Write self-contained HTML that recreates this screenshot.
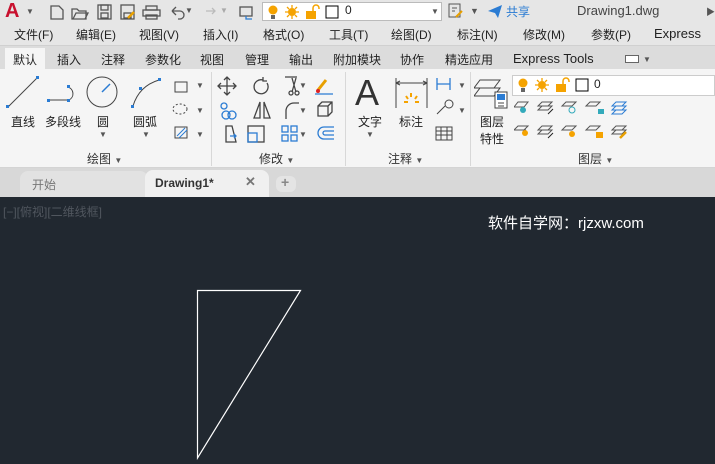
<!DOCTYPE html>
<html><head><meta charset="utf-8"><style>
*{margin:0;padding:0;box-sizing:border-box}
body{width:715px;height:464px;overflow:hidden;background:#212830;font-family:"Liberation Sans","Noto Sans CJK SC",sans-serif;font-size:12px;color:#222;position:relative}
.a{position:absolute;white-space:nowrap}
.top{left:0;top:0;width:715px;height:46px;background:#e6e6e6;border-bottom:1px solid #d0d0d0}
.tabs{left:0;top:46px;width:715px;height:23px;background:#dcdcdc}
.rib{left:0;top:69px;width:715px;height:99px;background:#f5f5f5;border-bottom:1px solid #d4d4d4}
.tb{left:0;top:168px;width:715px;height:29px;background:#d8d8d8}
.sep{top:72px;width:1px;height:94px;background:#d8d8d8}
.lbl{top:150px;font-size:12px;color:#333}
.tri{font-size:8px;color:#555}
</style></head><body>
<div class="a top"></div>
<div class="a tabs"></div>
<div class="a rib"></div>
<div class="a tb"></div>

<div class="a" style="left:5px;top:0px;font-size:20px;font-weight:bold;color:#c8102e;font-family:'Liberation Sans'">A</div>
<div class="a tri" style="left:26px;top:7px">▼</div>
<svg class="a" style="left:48px;top:3px" width="210" height="18" viewBox="0 0 210 18" fill="none" stroke="#555" stroke-width="1.3">
<path d="M3 3h8l4 4v9H3z"/>
<path d="M24 6h5l2 2h7v8H24z M25 16l3-6h12l-3 6"/>
<rect x="50" y="2" width="13" height="14"/><rect x="53" y="2" width="7" height="5"/><rect x="53" y="10" width="7" height="5"/>
<rect x="73" y="2" width="13" height="14"/><rect x="76" y="10" width="7" height="5"/><path d="M80 15l6-6" stroke="#e8a000" stroke-width="2.5"/>
<rect x="98" y="3" width="11" height="4"/><rect x="95" y="7" width="17" height="6"/><rect x="98" y="12" width="11" height="4"/>
<path d="M124 8l4-4M124 8l4 4M124 8h8a4 4 0 0 1 0 8h-2"/>
<path d="M158 8h9M164 5l3 3-3 3" stroke="#bbb"/>
<rect x="192" y="4" width="12" height="9"/><path d="M198 13v3h6" stroke="#2b7cd3"/>
</svg>
<div class="a tri" style="left:185px;top:6px">▼</div><div class="a tri" style="left:220px;top:6px;color:#aaa">▼</div>
<div class="a" style="left:262px;top:2px;width:180px;height:19px;background:#fff;border:1px solid #bbb"></div>
<svg class="a" style="left:266px;top:4px" width="76" height="16"><circle cx="7" cy="6" r="4.5" fill="#f5a300"/><rect x="5" y="11" width="4" height="4" fill="#666"/><circle cx="26" cy="8" r="4" fill="#f5a300"/><path d="M26 1v3M26 12v3M19 8h3M30 8h3M21 3l2 2M29 11l2 2M21 13l2-2M29 5l2-2" stroke="#f5a300" stroke-width="1.3"/><rect x="40" y="7" width="10" height="8" fill="#f5a300"/><path d="M47 7V4a3 3 0 0 1 6 0v1" stroke="#f5a300" stroke-width="1.5" fill="none"/><rect x="60" y="2" width="12" height="12" fill="#fff" stroke="#000"/></svg>
<div class="a" style="left:345px;top:3px;font-size:12px">0</div>
<div class="a tri" style="left:431px;top:7px;color:#555">▼</div>
<svg class="a" style="left:447px;top:2px" width="20" height="18" fill="none" stroke="#555"><rect x="2" y="2" width="11" height="13"/><path d="M5 6h5M5 9h3"/><path d="M9 15l6-6" stroke="#e8a000" stroke-width="2"/></svg>
<div class="a" style="left:470px;top:6px;font-size:9px;color:#555">▼</div>
<svg class="a" style="left:487px;top:4px" width="16" height="15"><path d="M1 7l14-6-4 13-3-5z" fill="#2b7cd3"/></svg>
<div class="a" style="left:506px;top:3px;color:#2b7cd3;font-size:12px">共享</div>
<div class="a" style="left:577px;top:3px;color:#444;font-size:13px">Drawing1.dwg</div>
<div class="a" style="left:706px;top:5px;font-size:9px;color:#555">▶</div>

<div class="a" style="top:26px;left:14px">文件(F)</div>
<div class="a" style="top:26px;left:76px">编辑(E)</div>
<div class="a" style="top:26px;left:139px">视图(V)</div>
<div class="a" style="top:26px;left:203px">插入(I)</div>
<div class="a" style="top:26px;left:263px">格式(O)</div>
<div class="a" style="top:26px;left:329px">工具(T)</div>
<div class="a" style="top:26px;left:391px">绘图(D)</div>
<div class="a" style="top:26px;left:457px">标注(N)</div>
<div class="a" style="top:26px;left:523px">修改(M)</div>
<div class="a" style="top:26px;left:591px">参数(P)</div>
<div class="a" style="top:26px;left:654px;font-size:13px">Express</div>

<div class="a" style="left:5px;top:48px;width:40px;height:21px;background:#f5f5f5"></div>
<div class="a" style="top:51px;left:13px">默认</div>
<div class="a" style="top:51px;left:57px">插入</div>
<div class="a" style="top:51px;left:101px">注释</div>
<div class="a" style="top:51px;left:145px">参数化</div>
<div class="a" style="top:51px;left:200px">视图</div>
<div class="a" style="top:51px;left:245px">管理</div>
<div class="a" style="top:51px;left:289px">输出</div>
<div class="a" style="top:51px;left:333px">附加模块</div>
<div class="a" style="top:51px;left:400px">协作</div>
<div class="a" style="top:51px;left:445px">精选应用</div>
<div class="a" style="top:51px;left:513px;font-size:13px">Express Tools</div>
<div class="a" style="left:625px;top:55px;width:14px;height:8px;border:1px solid #666;background:#fff"></div>
<div class="a tri" style="left:643px;top:55px">▼</div>

<div class="a sep" style="left:211px"></div>
<div class="a sep" style="left:345px"></div>
<div class="a sep" style="left:470px"></div>

<svg class="a" style="left:0;top:72px" width="212" height="80" fill="none" stroke="#444" stroke-width="1">
<path d="M8 35L37 6"/><rect x="6" y="33" width="3" height="3" fill="#2b7cd3" stroke="none"/><rect x="36" y="4" width="3" height="3" fill="#2b7cd3" stroke="none"/>
<path d="M49 28h20a7 7 0 0 0-1-13"/><rect x="47" y="27" width="3" height="3" fill="#2b7cd3" stroke="none"/><rect x="67" y="27" width="3" height="3" fill="#2b7cd3" stroke="none"/><rect x="67" y="13" width="3" height="3" fill="#2b7cd3" stroke="none"/>
<circle cx="102" cy="20" r="15"/><path d="M102 20l8-8" stroke="#2b7cd3" stroke-width="1.5"/>
<path d="M133 34q6-20 26-26"/><rect x="131" y="33" width="3" height="3" fill="#2b7cd3" stroke="none"/><rect x="158" y="6" width="3" height="3" fill="#2b7cd3" stroke="none"/><rect x="139" y="15" width="3" height="3" fill="#2b7cd3" stroke="none"/>
<rect x="175" y="10" width="12" height="10"/><ellipse cx="180" cy="37" rx="7" ry="5" stroke-dasharray="2 2"/><rect x="175" y="55" width="12" height="11"/><path d="M177 64l8-8M179 66l8-8" stroke="#2b7cd3"/>
</svg>
<div class="a tri" style="left:196px;top:81px">▼</div><div class="a tri" style="left:196px;top:106px">▼</div><div class="a tri" style="left:196px;top:130px">▼</div>
<div class="a" style="top:113px;left:11px">直线</div>
<div class="a" style="top:113px;left:45px">多段线</div>
<div class="a" style="top:113px;left:97px">圆</div>
<div class="a" style="top:113px;left:133px">圆弧</div>
<div class="a tri" style="left:99px;top:130px">▼</div><div class="a tri" style="left:142px;top:130px">▼</div>
<div class="a lbl" style="left:87px">绘图 <span class="tri">▼</span></div>

<svg class="a" style="left:214px;top:74px" width="130" height="70" fill="none" stroke="#444" stroke-width="1.3">
<path d="M13 4v16M5 12h16M10 6l3-3 3 3M10 18l3 3 3-3M7 9l-3 3 3 3M19 9l3 3-3 3"/>
<path d="M49 6a7 7 0 1 0 4 3M49 3v4h4"/>
<path d="M71 3h12M78 4l4 14M82 4l-4 14"/><circle cx="77" cy="19" r="2"/><circle cx="83" cy="19" r="2"/>
<path d="M104 16l8-10" stroke="#e8a000" stroke-width="3"/><circle cx="104" cy="17" r="2" fill="#d22" stroke="none"/><path d="M101 20h18" stroke="#2b7cd3"/>
<circle cx="10" cy="32" r="3" stroke="#2b7cd3"/><circle cx="12" cy="41" r="4" stroke="#2b7cd3"/><circle cx="18" cy="41" r="4" stroke="#2b7cd3"/>
<path d="M40 44l6-16v16zM50 44v-16l6 16z"/>
<path d="M72 45v-8a8 8 0 0 1 8-8h5"/>
<path d="M104 32h10v10h-10zM104 32l4-4h10v10l-4 4M114 32l4-4"/>
<path d="M12 52h6l4 16h-10z"/><path d="M16 62h6M20 60l2 2-2 2" stroke="#2b7cd3"/>
<rect x="34" y="52" width="16" height="16"/><rect x="34" y="59" width="9" height="9" stroke="#2b7cd3"/>
<rect x="68" y="52" width="6" height="6" stroke="#2b7cd3"/><rect x="77" y="52" width="6" height="6" stroke="#2b7cd3"/><rect x="68" y="61" width="6" height="6" stroke="#2b7cd3"/><rect x="77" y="61" width="6" height="6" stroke="#2b7cd3"/>
<path d="M120 53h-10a6 6 0 0 0 0 12h10M120 57h-9a2 2 0 0 0 0 4h9" stroke="#2b7cd3"/>
</svg>
<div class="a tri" style="left:299px;top:81px">▼</div><div class="a tri" style="left:299px;top:106px">▼</div><div class="a tri" style="left:299px;top:130px">▼</div>
<div class="a lbl" style="left:259px">修改 <span class="tri">▼</span></div>

<div class="a" style="left:355px;top:72px;font-size:36px;color:#333;font-family:'Liberation Sans'">A</div>
<div class="a" style="top:113px;left:358px">文字</div>
<div class="a tri" style="left:366px;top:130px">▼</div>
<svg class="a" style="left:394px;top:76px" width="70" height="68" fill="none" stroke="#444" stroke-width="1">
<path d="M2 2v30M33 2v30M2 7h31M2 7l4-2M2 7l4 2M33 7l-4-2M33 7l-4 2"/>
<path d="M10 26h4M21 26h4M12 20l2 3M23 20l-2 3M17 17v4" stroke="#f5a300" stroke-width="2"/>
<path d="M43 2v12M56 2v12M43 8h13" stroke="#2b7cd3" stroke-width="1.3"/>
<path d="M43 38l8-8"/><circle cx="55" cy="28" r="4"/>
<rect x="42" y="51" width="16" height="13"/><path d="M42 55h16M42 59h16M47 51v13M53 51v13"/>
</svg>
<div class="a" style="top:113px;left:399px">标注</div>
<div class="a tri" style="left:458px;top:81px">▼</div><div class="a tri" style="left:458px;top:106px">▼</div>
<div class="a lbl" style="left:388px">注释 <span class="tri">▼</span></div>

<svg class="a" style="left:474px;top:74px" width="36" height="36" fill="none" stroke="#444"><path d="M6 6h20l-6 8H0zM6 14h20l-6 8H0zM6 22h14"/><rect x="21" y="18" width="12" height="16" fill="#fff"/><rect x="23" y="20" width="8" height="6" fill="#2b7cd3" stroke="none"/><path d="M24 29h6M24 32h6"/></svg>
<div class="a" style="top:113px;left:480px">图层</div>
<div class="a" style="top:130px;left:480px">特性</div>
<div class="a" style="left:512px;top:75px;width:203px;height:21px;background:#fff;border:1px solid #ccc"></div>
<svg class="a" style="left:516px;top:77px" width="76" height="18"><circle cx="7" cy="6" r="4.5" fill="#f5a300"/><rect x="5" y="11" width="4" height="4" fill="#666"/><circle cx="26" cy="8" r="4" fill="#f5a300"/><path d="M26 1v3M26 12v3M19 8h3M30 8h3M21 3l2 2M29 11l2 2M21 13l2-2M29 5l2-2" stroke="#f5a300" stroke-width="1.3"/><rect x="40" y="7" width="10" height="8" fill="#f5a300"/><path d="M47 7V4a3 3 0 0 1 6 0v1" stroke="#f5a300" stroke-width="1.5" fill="none"/><rect x="60" y="2" width="12" height="12" fill="#fff" stroke="#000"/></svg>
<div class="a" style="left:594px;top:77px;font-size:12px">0</div>
<svg class="a" style="left:514px;top:100px" width="120" height="44" fill="none" stroke="#555">
<path d="M4 2h10l-4 5H0z"/><circle cx="9" cy="10" r="3" fill="#3ab" stroke="none"/>
<path d="M28 2h10l-4 4H24zM28 6h10l-4 4H24z"/><path d="M34 14l5-5" stroke="#222"/>
<path d="M52 2h10l-4 4H48z"/><circle cx="58" cy="10" r="3" stroke="#3ab"/>
<path d="M76 2h10l-4 4H72z"/><rect x="84" y="9" width="6" height="5" fill="#3ab" stroke="none"/>
<path d="M102 2h10l-4 4H98zM102 6h10l-4 4H98zM102 10h10l-4 4H98z" stroke="#2b7cd3"/>
<path d="M4 26h10l-4 4H0zM4 30h8"/><circle cx="11" cy="33" r="3" fill="#f5a300" stroke="none"/>
<path d="M28 26h10l-4 4H24zM28 30h10l-4 4H24z"/><path d="M34 38l5-5" stroke="#222"/>
<path d="M52 26h10l-4 4H48zM52 30h6"/><circle cx="58" cy="34" r="3" fill="#f5a300" stroke="none"/>
<path d="M76 26h10l-4 4H72z"/><rect x="82" y="32" width="7" height="6" fill="#f5a300" stroke="none"/>
<path d="M102 26h10l-4 4H98zM102 30h10l-4 4H98z"/><path d="M106 38l6-6" stroke="#e8a000" stroke-width="2.5"/>
</svg>
<div class="a lbl" style="left:578px">图层 <span class="tri">▼</span></div>

<div class="a" style="left:20px;top:171px;width:128px;height:26px;background:#e2e2e2;border-radius:8px 8px 0 0"></div>
<div class="a" style="left:32px;top:176px;color:#777">开始</div>
<div class="a" style="left:145px;top:170px;width:124px;height:27px;background:#f0f0f0;border-radius:8px 8px 0 0"></div>
<div class="a" style="left:155px;top:176px;font-weight:bold;font-size:12px;color:#333">Drawing1*</div>
<div class="a" style="left:245px;top:174px;font-size:13px;color:#777;font-weight:bold">✕</div>
<div class="a" style="left:276px;top:176px;width:20px;height:16px;background:#e4e4e4;border-radius:6px"></div>
<div class="a" style="left:281px;top:174px;font-size:14px;color:#888;font-weight:bold">+</div>

<div class="a" style="left:3px;top:203px;color:#50565e;font-size:12px">[−][俯视][二维线框]</div>
<div class="a" style="left:488px;top:212px;color:#fff;font-size:15px">软件自学网：rjzxw.com</div>
<svg class="a" style="left:0;top:0" width="715" height="464"><path d="M197.5 290.5H300.5L197.5 458Z" fill="none" stroke="#fff" stroke-width="1.2"/></svg>
</body></html>
